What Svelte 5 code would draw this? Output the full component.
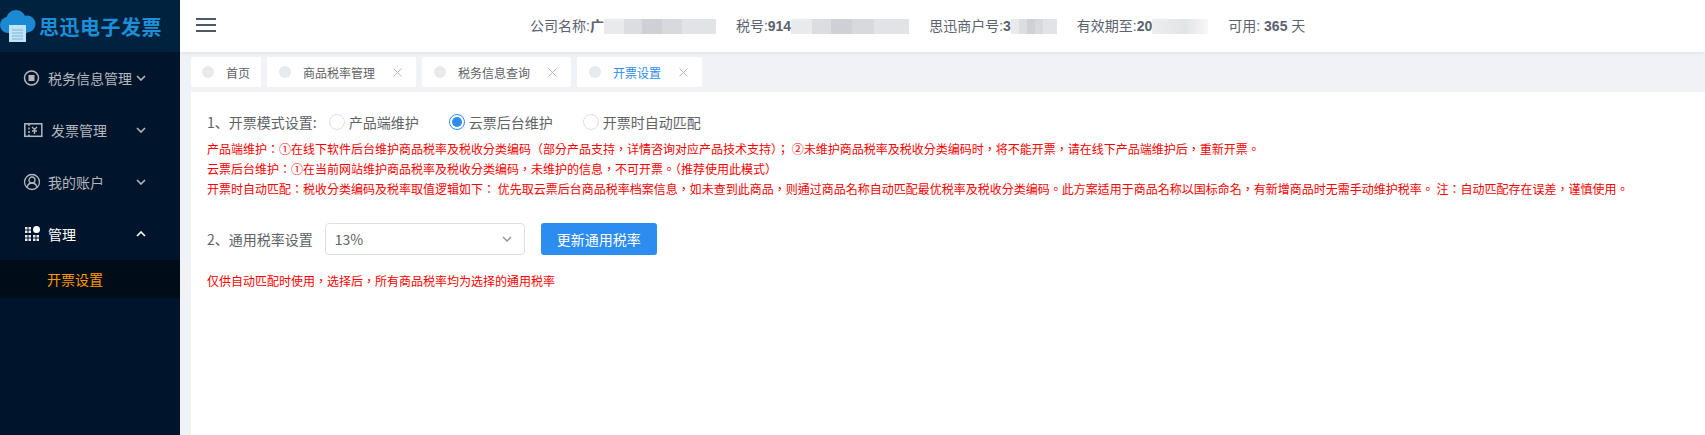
<script>
  const menu = [
    { label: '税务信息管理', icon: 'tax', gap: 6, chevron: 'down' },
    { label: '发票管理', icon: 'invoice', gap: 9, chevron: 'down' },
    { label: '我的账户', icon: 'user', gap: 6, chevron: 'down' },
    { label: '管理', icon: 'grid', gap: 6, chevron: 'up', active: true }
  ];
  const tabs = [
    { label: '首页' },
    { label: '商品税率管理', close: true },
    { label: '税务信息查询', close: true },
    { label: '开票设置', close: true, current: true }
  ];
  const modes = [
    { label: '产品端维护', w: 120 },
    { label: '云票后台维护', w: 134 },
    { label: '开票时自动匹配', w: 0 }
  ];
  const selected = 1;
</script>

<div class="page">
  <aside class="sidebar">
    <div class="logo">
      <svg class="cloud" width="36" height="34" viewBox="0 0 36 34">
        <g fill="#1b8ad3">
          <circle cx="8" cy="16" r="8" />
          <circle cx="16" cy="11" r="10" />
          <circle cx="27" cy="15" r="8.500" />
          <rect x="8" y="14" width="19" height="10" />
        </g>
        <rect x="9" y="16" width="17" height="17" fill="#bfe3f7" />
        <path d="M12 21h11M12 24h11M12 27h11M12 30h11" stroke="#7fb4d6" stroke-width="1" />
      </svg>
      <span class="logo-text">思迅电子发票</span>
    </div>
    <nav>
      {#each menu as item}
        <div class="menu-item" class:active={item.active}>
          <svg class="menu-icon" width="18" height="18" viewBox="0 0 18 18" fill="none" stroke="currentColor">
            {#if item.icon === 'tax'}
              <circle cx="7.500" cy="9" r="7" stroke-width="1.500" />
              <rect x="4.500" y="6" width="6" height="6" fill="currentColor" stroke="none" />
            {:else if item.icon === 'invoice'}
              <rect x="0.800" y="2.800" width="17" height="12.500" stroke-width="1.500" />
              <path d="M5 3v12" stroke-width="1.500" stroke-dasharray="2 1.500" />
              <path d="M8 6l2.500 2.500L13 6M10.500 8.500V13M8 10h5" stroke-width="1.300" />
            {:else if item.icon === 'user'}
              <circle cx="8" cy="9" r="7.500" stroke-width="1.300" />
              <circle cx="8" cy="7" r="3" stroke-width="1.300" />
              <path d="M3 14c1-3 3-4 5-4s4 1 5 4" stroke-width="1.300" />
            {:else}
              <path d="M1 2h6v6H1zM1 10h6v6H1zM9 10h6v6H9z" fill="currentColor" stroke="none" opacity="0.900" />
              <path d="M4 2v6M1 5h6M4 10v6M1 13h6M12 10v6M9 13h6" stroke="#00152c" stroke-width="1" />
              <circle cx="12.500" cy="4.500" r="3.500" fill="currentColor" stroke="none" />
            {/if}
          </svg>
          <span class="menu-label" style="margin-left:{item.gap}px">{item.label}</span>
          <svg class="chevron" width="10" height="6" viewBox="0 0 10 6" fill="none" stroke="currentColor" stroke-width="1.600">
            {#if item.chevron === 'down'}
              <path d="M1 1l4 4 4-4" />
            {:else}
              <path d="M1 5l4-4 4 4" />
            {/if}
          </svg>
        </div>
      {/each}
      <div class="submenu">开票设置</div>
    </nav>
  </aside>

  <div class="main">
    <header class="topbar">
      <div class="hamburger"><i></i><i></i><i></i></div>
      <div class="info">
        <span class="field">公司名称:<b>广</b><span class="mask" style="width:112px"></span></span>
        <span class="field">税号:<b>914</b><span class="mask" style="width:118px"></span></span>
        <span class="field">思迅商户号:<b>3</b><span class="mask" style="width:46px"></span></span>
        <span class="field">有效期至:<b>20</b><span class="mask soft" style="width:56px"></span></span>
        <span class="field">可用:&nbsp;<b>365</b>&nbsp;天</span>
      </div>
    </header>

    <div class="tabs">
      {#each tabs as tab}
        <div class="tab" class:current={tab.current}>
          <i class="dot"></i>
          <span class="tab-label">{tab.label}</span>
          {#if tab.close}
            <svg class="close" width="9" height="9" viewBox="0 0 9 9" stroke="#b5b8bf" stroke-width="1" fill="none">
              <path d="M0.500 0.500l8 8M8.500 0.500l-8 8" />
            </svg>
          {/if}
        </div>
      {/each}
    </div>

    <section class="panel">
      <div class="row modes">
        <span class="label">1、开票模式设置:</span>
        {#each modes as mode, i}
          <span class="radio-item" style={mode.w ? `width:${mode.w}px` : ''}>
            <span class="radio" class:on={i === selected}></span>
            <span class="radio-label">{mode.label}</span>
          </span>
        {/each}
      </div>
      <div class="notes">
        <p>产品端维护：①在线下软件后台维护商品税率及税收分类编码（部分产品支持，详情咨询对应产品技术支持）； ②未维护商品税率及税收分类编码时，将不能开票，请在线下产品端维护后，重新开票。</p>
        <p>云票后台维护：①在当前网站维护商品税率及税收分类编码，未维护的信息，不可开票。（推荐使用此模式）</p>
        <p>开票时自动匹配：税收分类编码及税率取值逻辑如下： 优先取云票后台商品税率档案信息，如未查到此商品，则通过商品名称自动匹配最优税率及税收分类编码。此方案适用于商品名称以国标命名，有新增商品时无需手动维护税率。 注：自动匹配存在误差，谨慎使用。</p>
      </div>
      <div class="row rate">
        <span class="label">2、通用税率设置</span>
        <div class="select">
          <span>13%</span>
          <svg width="10" height="6" viewBox="0 0 10 6" fill="none" stroke="#8a93a3" stroke-width="1.300"><path d="M1 1l4 4 4-4" /></svg>
        </div>
        <button class="primary">更新通用税率</button>
      </div>
      <p class="hint">仅供自动匹配时使用，选择后，所有商品税率均为选择的通用税率</p>
    </section>
  </div>
</div>

<style>
  :global(body) {
    margin: 0;
    background: #fff;
  }

  .page {
    display: flex;
    height: 435px;
    overflow: hidden;
    font-family: "Noto Sans CJK SC", "Liberation Sans", sans-serif;
    font-size: 14px;
    color: #606266;
  }

  .sidebar {
    width: 180px;
    flex: none;
    background: #00152c;
    color: #b4b8be;
  }

  .logo {
    display: flex;
    height: 52px;
    align-items: center;
    background: #00223f;
  }

  .cloud {
    align-self: flex-start;
    margin-top: 9px;
    overflow: visible;
  }

  .logo-text {
    margin-left: 3px;
    font-size: 20px;
    font-weight: 700;
    letter-spacing: 0.500px;
    color: #1b8fd8;
  }

  .menu-item {
    display: flex;
    align-items: center;
    height: 52px;
    padding-left: 24px;
    position: relative;
    line-height: 1;
  }

  .menu-item.active {
    color: #fff;
  }

  .menu-icon {
    overflow: visible;
  }

  .menu-label {
    white-space: nowrap;
  }

  .chevron {
    position: absolute;
    left: 136px;
    top: 23px;
  }

  .submenu {
    height: 38px;
    line-height: 38px;
    padding-left: 47px;
    background: #000c17;
    color: #ff9800;
  }

  .main {
    flex: 1;
    min-width: 0;
    background: #f0f2f5;
    display: flex;
    flex-direction: column;
  }

  .topbar {
    height: 52px;
    flex: none;
    background: #fff;
    box-shadow: 0 1px 4px rgba(0, 21, 41, 0.08);
    display: flex;
    align-items: center;
    position: relative;
  }

  .hamburger {
    margin: 0 0 2px 16px;
    width: 20px;
    display: flex;
    flex-direction: column;
    gap: 4px;
  }

  .hamburger i {
    display: block;
    height: 2px;
    background: #4f5668;
  }

  .info {
    margin-left: 314px;
    display: flex;
    gap: 20px;
    white-space: nowrap;
    color: #5b6270;
    line-height: 1;
    font-family: "Liberation Sans", "Noto Sans CJK SC", sans-serif;
  }

  .field {
    display: inline-flex;
    align-items: center;
  }

  .field b {
    font-weight: 700;
  }

  .mask {
    display: inline-block;
    height: 15px;
    background: linear-gradient(90deg, #e9eaec 0 18%, #dcdde1 18% 34%, #cfd0d6 34% 52%, #d8d9dd 52% 70%, #e2e3e6 70% 100%);
  }

  .mask.soft {
    background: linear-gradient(90deg, #eceded, #e3e4e7 60%, #f8f8f9);
  }

  .tabs {
    display: flex;
    gap: 6px;
    padding: 5px 0 0 11px;
    height: 30px;
    flex: none;
  }

  .tab {
    display: flex;
    align-items: center;
    height: 30px;
    background: #fff;
    border-radius: 2px;
    padding: 0 12px;
    font-size: 12px;
    color: #606266;
  }

  .tab:first-child {
    padding: 0 11px;
  }

  .tab.current {
    color: #2d8cf0;
  }

  .dot {
    width: 12px;
    height: 12px;
    border-radius: 50%;
    background: #e8eaec;
    margin-right: 12px;
  }

  .close {
    margin: 0 2px 0 18px;
  }

  .panel {
    margin: 5px 0 0 11px;
    flex: 1;
    background: #fff;
    padding: 18px 16px;
  }

  .row {
    display: flex;
    align-items: center;
  }

  .modes {
    height: 24px;
  }

  .label {
    color: #606266;
    white-space: nowrap;
  }

  .radio-item {
    display: inline-flex;
    align-items: center;
  }

  .modes .label {
    margin-right: 12px;
  }

  .radio {
    width: 14px;
    height: 14px;
    border: 1px solid #dcdfe6;
    border-radius: 50%;
    margin-right: 4px;
    position: relative;
  }

  .radio.on {
    border-color: #2d8cf0;
  }

  .radio.on::after {
    content: '';
    position: absolute;
    inset: 2px;
    border-radius: 50%;
    background: #2d8cf0;
  }

  .notes {
    margin-top: 5px;
    font-family: "Noto Sans CJK TC", "Noto Sans CJK SC", sans-serif;
  }

  .notes p,
  .hint {
    margin: 0;
    font-size: 12px;
    line-height: 20px;
    color: #f00;
    white-space: nowrap;
  }

  .rate {
    margin-top: 24px;
  }

  .select {
    margin-left: 12px;
    width: 200px;
    height: 32px;
    box-sizing: border-box;
    border: 1px solid #dcdfe6;
    border-radius: 4px;
    padding: 0 12px 0 9px;
    display: flex;
    align-items: center;
    justify-content: space-between;
  }

  .primary {
    margin-left: 16px;
    width: 116px;
    height: 32px;
    border: 0;
    border-radius: 3px;
    background: #2d8cf0;
    color: #fff;
    font: inherit;
    padding: 0;
  }

  .hint {
    margin-top: 16px;
    font-family: "Noto Sans CJK TC", "Noto Sans CJK SC", sans-serif;
  }
</style>
